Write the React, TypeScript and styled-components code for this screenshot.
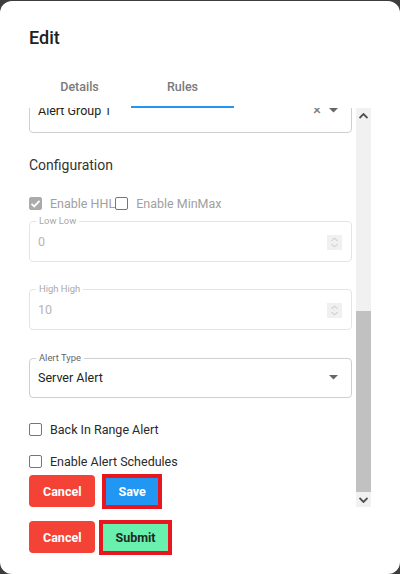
import React, { useLayoutEffect, useRef } from "react";
import styled, { createGlobalStyle } from "styled-components";

const checkMark = `url("data:image/svg+xml,${encodeURIComponent(
  `<svg xmlns="http://www.w3.org/2000/svg" width="13" height="13" viewBox="0 0 13 13"><path d="M2.5 6.8 L5.2 9.4 L10.5 3.8" fill="none" stroke="#fff" stroke-width="1.8"/></svg>`
)}")`;

const Global = createGlobalStyle`
  html, body { margin: 0; padding: 0; background: #3d3d3d; }
  body { font-family: Roboto, "Liberation Sans", Arial, sans-serif; }
  * { box-sizing: border-box; }
`;

const Dialog = styled.div`
  width: 400px;
  height: 573px;
  margin-top: 1px;
  background: #fff;
  border-radius: 12px;
  display: flex;
  flex-direction: column;
  overflow: hidden;
`;

const Title = styled.h2`
  margin: 0;
  padding: 25px 29px 0;
  font-size: 18px;
  line-height: 24px;
  font-weight: 500;
  color: #212121;
`;

const TabRow = styled.div`
  display: flex;
  padding-left: 28px;
  margin-top: 10px;
`;

const Tab = styled.div<{ $active?: boolean }>`
  position: relative;
  width: 103px;
  height: 48px;
  padding-top: 5px;
  display: flex;
  align-items: center;
  justify-content: center;
  font-size: 12.5px;
  font-weight: 500;
  color: #7a7a7a;
  &::after {
    content: "";
    display: ${(p) => (p.$active ? "block" : "none")};
    position: absolute;
    left: 0;
    right: 0;
    bottom: 0;
    height: 2px;
    background: #2196f3;
  }
`;

const ScrollFrame = styled.div`
  flex: none;
  height: 401px;
  margin-left: 29px;
  display: flex;
`;

const ScrollContent = styled.div`
  width: 327px;
  height: 100%;
  padding-right: 4px;
  overflow: hidden;
  display: flex;
  flex-direction: column;
`;

const Scrollbar = styled.div`
  width: 15px;
  height: 399px;
  background: #f1f1f1;
  display: flex;
  flex-direction: column;
`;

const ScrollButton = styled.div`
  flex: none;
  height: 15px;
  display: flex;
  align-items: center;
  justify-content: center;
`;

const Track = styled.div`
  flex: 1;
  display: flex;
  flex-direction: column;
  justify-content: flex-end;
`;

const Thumb = styled.div`
  height: 181px;
  background: #c1c1c1;
`;

const SectionTitle = styled.div<{ $mt: number }>`
  margin-top: ${(p) => p.$mt}px;
  font-size: 14px;
  line-height: 20px;
  color: #333;
  flex: none;
`;

const Outlined = styled.div<{ $mt: number; $h: number; $disabled?: boolean; $pr: number }>`
  position: relative;
  flex: none;
  margin-top: ${(p) => p.$mt}px;
  height: ${(p) => p.$h}px;
  border: 1px solid ${(p) => (p.$disabled ? "#e4e4e4" : "#cfcfcf")};
  border-radius: 4px;
  display: flex;
  align-items: center;
  padding: 0 ${(p) => p.$pr}px 0 8px;
`;

const FloatLabel = styled.span<{ $disabled?: boolean }>`
  position: absolute;
  top: -7px;
  left: 6px;
  padding: 0 3px;
  background: #fff;
  font-size: 9.4px;
  line-height: 12px;
  color: ${(p) => (p.$disabled ? "#a8a8a8" : "#666")};
`;

const Value = styled.span<{ $disabled?: boolean }>`
  flex: 1;
  font-size: 12.5px;
  color: ${(p) => (p.$disabled ? "#b5b5b5" : "#222")};
`;

const Spinner = styled.span`
  width: 15px;
  height: 15px;
  margin-top: 3px;
  background: #f0f0f0;
  display: flex;
  align-items: center;
  justify-content: center;
`;

const Adorn = styled.span`
  display: flex;
  align-items: center;
  gap: 8px;
  color: #7a7a7a;
  font-size: 15px;
  line-height: 1;
`;

const CheckRow = styled.div<{ $mt: number }>`
  flex: none;
  margin-top: ${(p) => p.$mt}px;
  height: 20px;
  display: flex;
  align-items: center;
`;

const CheckLabel = styled.label<{ $disabled?: boolean }>`
  display: flex;
  align-items: center;
  gap: 8px;
  font-size: 12.5px;
  color: ${(p) => (p.$disabled ? "#a0a0a0" : "#2a2a2a")};
`;

const CheckBox = styled.input.attrs({ type: "checkbox" })`
  appearance: none;
  margin: 0;
  width: 13px;
  height: 13px;
  border: 1px solid #767676;
  border-radius: 2px;
  background: #fff;
  &:checked {
    border-color: #ababab;
    background: #ababab ${checkMark} no-repeat center;
  }
`;

const ButtonRow = styled.div<{ $mt: number }>`
  flex: none;
  margin-top: ${(p) => p.$mt}px;
  height: 36px;
  display: flex;
  align-items: center;
`;

const Actions = styled.div`
  display: flex;
  align-items: center;
  padding: 10px 29px 0;
  height: 46px;
`;

const CancelButton = styled.button`
  height: 32px;
  padding: 0 14px;
  border: none;
  border-radius: 4px;
  background: #f44336;
  color: #fff;
  font-family: inherit;
  font-size: 12.5px;
  font-weight: 700;
`;

const HighlightButton = styled.button<{ $bg: string; $fg: string; $ml: number }>`
  margin-left: ${(p) => p.$ml}px;
  height: 35px;
  padding: 0 12px;
  border: 4px solid #e8161e;
  border-radius: 0;
  background: ${(p) => p.$bg};
  color: ${(p) => p.$fg};
  font-family: inherit;
  font-size: 12.5px;
  font-weight: 700;
`;

const SpinIcon = () => (
  <svg width="9" height="11" viewBox="0 0 9 11" fill="none" stroke="#c4c4c4" strokeWidth="1">
    <polyline points="1.5,4 4.5,1 7.5,4" />
    <polyline points="1.5,7 4.5,10 7.5,7" />
  </svg>
);

const Caret = () => (
  <svg width="9" height="5" viewBox="0 0 9 5">
    <polygon points="0,0 9,0 4.5,4.5" fill="#666" />
  </svg>
);

const ScrollArrow = ({ down }: { down?: boolean }) => (
  <svg width="9" height="6" viewBox="0 0 9 6">
    <path
      d={down ? "M0.5 1 L4.5 5 L8.5 1" : "M0.5 5 L4.5 1 L8.5 5"}
      fill="none"
      stroke="#505050"
      strokeWidth="1.8"
    />
  </svg>
);

type FieldProps = {
  label: string;
  value: string;
  mt: number;
  h?: number;
  disabled?: boolean;
  kind?: "text" | "number" | "select" | "clear";
};

const Field = ({ label, value, mt, h = 40, disabled, kind = "text" }: FieldProps) => (
  <Outlined $mt={mt} $h={h} $disabled={disabled} $pr={kind === "number" ? 9 : 13}>
    <FloatLabel $disabled={disabled}>{label}</FloatLabel>
    <Value $disabled={disabled}>{value}</Value>
    {kind === "number" && (
      <Spinner>
        <SpinIcon />
      </Spinner>
    )}
    {kind === "select" && (
      <Adorn>
        <Caret />
      </Adorn>
    )}
    {kind === "clear" && (
      <Adorn>
        <span>×</span>
        <Caret />
      </Adorn>
    )}
  </Outlined>
);

export default function App() {
  const ref = useRef<HTMLDivElement>(null);
  useLayoutEffect(() => {
    if (ref.current) ref.current.scrollTop = ref.current.scrollHeight;
  }, []);
  return (
    <>
      <Global />
      <Dialog>
        <Title>Edit</Title>
        <TabRow>
          <Tab>Details</Tab>
          <Tab $active>Rules</Tab>
        </TabRow>
        <ScrollFrame>
          <ScrollContent ref={ref}>
            <SectionTitle $mt={20}>General</SectionTitle>
            <Field label="Rule Name" value="High Temperature" mt={24} />
            <Field label="Tag" value="TT-101" mt={28} kind="select" />
            <Field label="Description" value="Temperature limits" mt={28} />
            <Field label="Severity" value="Major" mt={28} kind="select" />
            <Field label="Delay (sec)" value="0" mt={28} kind="number" />
            <Field label="Alert Group" value="Alert Group 1" mt={21} h={46} kind="clear" />
            <SectionTitle $mt={22}>Configuration</SectionTitle>
            <CheckRow $mt={18}>
              <CheckLabel $disabled>
                <CheckBox checked disabled readOnly />
                Enable HHL
              </CheckLabel>
              <CheckLabel $disabled>
                <CheckBox readOnly />
                Enable MinMax
              </CheckLabel>
            </CheckRow>
            <Field label="Low Low" value="0" mt={7.5} h={41} disabled kind="number" />
            <Field label="High High" value="10" mt={27} h={41} disabled kind="number" />
            <Field label="Alert Type" value="Server Alert" mt={28} kind="select" />
            <CheckRow $mt={21.5}>
              <CheckLabel>
                <CheckBox readOnly />
                Back In Range Alert
              </CheckLabel>
            </CheckRow>
            <CheckRow $mt={12}>
              <CheckLabel>
                <CheckBox readOnly />
                Enable Alert Schedules
              </CheckLabel>
            </CheckRow>
            <ButtonRow $mt={2}>
              <CancelButton>Cancel</CancelButton>
              <HighlightButton $bg="#2196f3" $fg="#fff" $ml={7}>
                Save
              </HighlightButton>
            </ButtonRow>
          </ScrollContent>
          <Scrollbar>
            <ScrollButton>
              <ScrollArrow />
            </ScrollButton>
            <Track>
              <Thumb />
            </Track>
            <ScrollButton>
              <ScrollArrow down />
            </ScrollButton>
          </Scrollbar>
        </ScrollFrame>
        <Actions>
          <CancelButton>Cancel</CancelButton>
          <HighlightButton $bg="#69f0ae" $fg="#1e2a22" $ml={4}>
            Submit
          </HighlightButton>
        </Actions>
      </Dialog>
    </>
  );
}
